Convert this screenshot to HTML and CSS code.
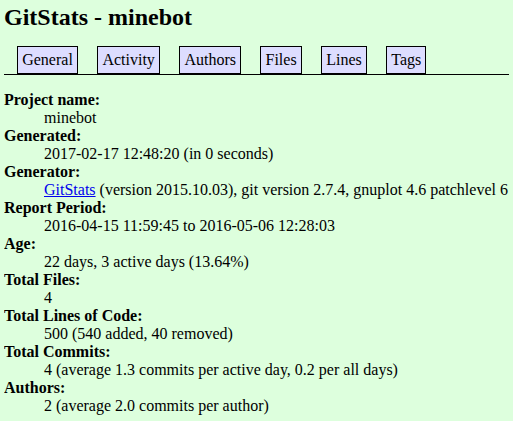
FILE: index.html
```html
<!DOCTYPE html>
<html>
<head>
<meta charset="utf-8">
<title>GitStats - minebot</title>
<link rel="stylesheet" href="styles.css">
</head>
<body>
<h1 class="title">GitStats - minebot</h1>
<div class="nav">
<ul>
<li><a href="#">General</a></li>
<li><a href="#">Activity</a></li>
<li><a href="#">Authors</a></li>
<li><a href="#">Files</a></li>
<li><a href="#">Lines</a></li>
<li><a href="#">Tags</a></li>
</ul>
</div>
<dl class="info">
<dt>Project name:</dt><dd>minebot</dd>
<dt>Generated:</dt><dd>2017-02-17 12:48:20 (in 0 seconds)</dd>
<dt>Generator:</dt><dd><a class="link" href="#">GitStats</a> (version 2015.10.03), git version 2.7.4, gnuplot 4.6 patchlevel 6</dd>
<dt>Report Period:</dt><dd>2016-04-15 11:59:45 to 2016-05-06 12:28:03</dd>
<dt>Age:</dt><dd>22 days, 3 active days (13.64%)</dd>
<dt>Total Files:</dt><dd>4</dd>
<dt>Total Lines of Code:</dt><dd>500 (540 added, 40 removed)</dd>
<dt>Total Commits:</dt><dd>4 (average 1.3 commits per active day, 0.2 per all days)</dd>
<dt>Authors:</dt><dd>2 (average 2.0 commits per author)</dd>
</dl>
</body>
</html>
```
FILE: styles.css
```css
html, body {
  background-color: #dfd;
}
body {
  margin: 4px;
  color: black;
  font-family: "Liberation Serif", "Times New Roman", serif;
  font-size: 16px;
  white-space: nowrap;
}
.title {
  margin: 0;
  font-size: 24px;
  font-weight: bold;
}
.nav {
  border-bottom: 1px solid black;
  padding-left: 13px;
  margin-top: 15.4px;
}
.nav ul {
  list-style: none;
  margin: 0;
  padding: 0;
  display: flex;
  gap: 19.2px;
  align-items: flex-end;
}
.nav li a {
  display: block;
  background-color: #ddf;
  border: 1px solid black;
  padding: 4px 4.2px 3.6px 4.2px;
  text-decoration: none;
  color: black;
}
.info {
  margin: 16.5px 0 0 0;
}
.info dt {
  font-weight: bold;
}
.info dd {
  margin-left: 40px;
}
.link {
  color: #00e;
}
```
